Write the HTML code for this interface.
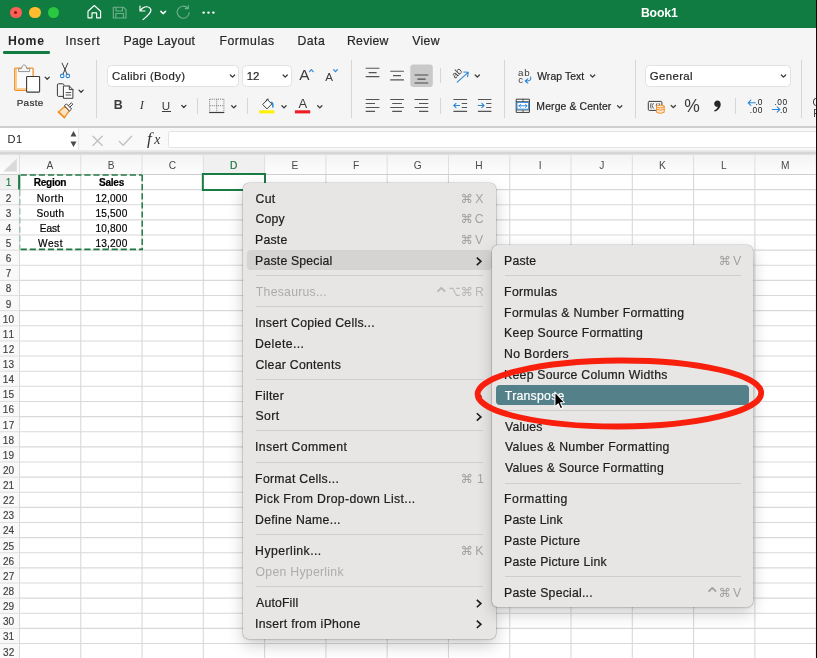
<!DOCTYPE html>
<html><head><meta charset="utf-8"><title>Book1</title>
<style>
*{box-sizing:border-box;margin:0;padding:0}
html,body{width:817px;height:658px;overflow:hidden;background:#fff}
body{position:relative;font-family:"Liberation Sans",sans-serif;color:#262626}
.abs{position:absolute}
.t{position:absolute;white-space:nowrap;line-height:1}
#w{position:absolute;left:0;top:0;width:817px;height:658px;will-change:transform}
svg{position:absolute;overflow:visible}
</style></head><body><div id="w">
<div class="abs" style="left:0px;top:0px;width:817px;height:27.6px;background:#107c41;"></div>
<div class="abs" style="left:10px;top:6.6px;width:11.8px;height:11.8px;background:#fe5f57;border-radius:50%;"></div>
<div class="abs" style="left:28.9px;top:6.6px;width:11.8px;height:11.8px;background:#febc2e;border-radius:50%;"></div>
<div class="abs" style="left:47.7px;top:6.6px;width:11.8px;height:11.8px;background:#28c840;border-radius:50%;"></div>
<div class="abs" style="left:14.4px;top:11px;width:3.1px;height:3.1px;background:#8a1108;border-radius:50%;"></div>
<svg style="left:0;top:0" width="230" height="28" viewBox="0 0 230 28" fill="none" stroke="#fff" stroke-width="1.15" stroke-linecap="round" stroke-linejoin="round">
<path d="M88 11.2 L94.3 5.5 L100.6 11.2 V17.8 H96.6 V12.8 H92 V17.8 H88 Z"/>
<g opacity="0.4"><path d="M113.3 7.2 H123.5 L126 9.7 V18 H113.3 Z M116 7.2 V11 H122.5 V7.2 M115.8 18 V13.5 H123.5 V18"/></g>
<path d="M140 6 V11 H145 M140.3 10.8 C143 6 149 5.5 150.7 9 C152 12 148 15.5 143 19.6"/>
<path d="M160.9 11.4 L163.2 13.7 L165.5 11.4" stroke-width="1.5"/>
<g opacity="0.4"><path d="M187.5 8 A6 6 0 1 0 189.2 12.5 M188.3 5.5 V8.6 H185.2"/></g>
<g fill="#fff" stroke="none"><circle cx="203.6" cy="12.6" r="1.2"/><circle cx="208.5" cy="12.6" r="1.2"/><circle cx="213.4" cy="12.6" r="1.2"/></g>
</svg>
<div class="t" style="left:640.90px;top:7.00px;font-size:12.26px;font-weight:bold;color:#fff;letter-spacing:-0.113px;">Book1</div>
<div class="abs" style="left:0px;top:27.6px;width:817px;height:98.6px;background:#f5f5f5;"></div>
<div class="abs" style="left:0px;top:126px;width:817px;height:1.6px;background:#cecece;"></div>
<div class="t" style="left:8.00px;top:35.00px;font-size:12.26px;font-weight:bold;letter-spacing:0.635px;">Home</div>
<div class="abs" style="left:3px;top:51.2px;width:46.6px;height:2.4px;background:#107c41;border-radius:1.2px;"></div>
<div class="t" style="left:65.50px;top:35.00px;font-size:12.26px;letter-spacing:0.683px;-webkit-text-stroke:0.2px;">Insert</div>
<div class="t" style="left:123.52px;top:35.00px;font-size:12.26px;letter-spacing:0.270px;-webkit-text-stroke:0.2px;">Page Layout</div>
<div class="t" style="left:219.42px;top:35.00px;font-size:12.26px;letter-spacing:0.527px;-webkit-text-stroke:0.2px;">Formulas</div>
<div class="t" style="left:297.42px;top:35.00px;font-size:12.26px;letter-spacing:0.504px;-webkit-text-stroke:0.2px;">Data</div>
<div class="t" style="left:347.02px;top:35.00px;font-size:12.26px;letter-spacing:0.234px;-webkit-text-stroke:0.2px;">Review</div>
<div class="t" style="left:412.14px;top:35.00px;font-size:12.26px;letter-spacing:0.367px;-webkit-text-stroke:0.2px;">View</div>
<div class="abs" style="left:96.2px;top:60.3px;width:1px;height:57.4px;background:#d6d6d6;"></div>
<div class="abs" style="left:351.2px;top:60.3px;width:1px;height:57.4px;background:#d6d6d6;"></div>
<div class="abs" style="left:504.2px;top:60.3px;width:1px;height:57.4px;background:#d6d6d6;"></div>
<div class="abs" style="left:634.6px;top:60.3px;width:1px;height:57.4px;background:#d6d6d6;"></div>
<div class="abs" style="left:800.7px;top:60.3px;width:1px;height:57.4px;background:#d6d6d6;"></div>
<div class="abs" style="left:196.9px;top:98px;width:1px;height:16.3px;background:#d6d6d6;"></div>
<div class="abs" style="left:247.0px;top:98px;width:1px;height:16.3px;background:#d6d6d6;"></div>
<div class="abs" style="left:440.2px;top:67.8px;width:1px;height:15.6px;background:#d6d6d6;"></div>
<div class="abs" style="left:440.2px;top:98.1px;width:1px;height:16.1px;background:#d6d6d6;"></div>
<div class="abs" style="left:735.0px;top:98.2px;width:1px;height:16.3px;background:#d6d6d6;"></div>
<div class="abs" style="left:106.5px;top:64.5px;width:132.6px;height:22.4px;background:#fff;border:1px solid #e2e2e2;border-radius:4.5px;"></div>
<div class="abs" style="left:241.6px;top:64.5px;width:50.3px;height:22.4px;background:#fff;border:1px solid #e2e2e2;border-radius:4.5px;"></div>
<div class="abs" style="left:644.6px;top:64.5px;width:146.1px;height:22.4px;background:#fff;border:1px solid #e2e2e2;border-radius:4.5px;"></div>
<div class="t" style="left:112.03px;top:71.00px;font-size:11.4px;letter-spacing:0.302px;-webkit-text-stroke:0.2px;">Calibri (Body)</div>
<div class="t" style="left:246.65px;top:71.00px;font-size:11.4px;letter-spacing:-0.029px;-webkit-text-stroke:0.2px;">12</div>
<div class="t" style="left:649.83px;top:71.00px;font-size:11.4px;letter-spacing:0.364px;-webkit-text-stroke:0.2px;">General</div>
<div class="t" style="left:16.71px;top:98.00px;font-size:9.9px;color:#303030;letter-spacing:0.311px;-webkit-text-stroke:0.2px;">Paste</div>
<div class="t" style="left:537.15px;top:72.00px;font-size:10.4px;letter-spacing:0.090px;-webkit-text-stroke:0.2px;">Wrap Text</div>
<div class="t" style="left:536.37px;top:102.00px;font-size:10.4px;letter-spacing:0.124px;-webkit-text-stroke:0.2px;">Merge &amp; Center</div>
<div class="t" style="left:113.69px;top:99.00px;font-size:12.4px;font-weight:bold;color:#3b3b3b;">B</div>
<div class="t" style="left:139.86px;top:99.00px;font-size:12.6px;font-style:italic;color:#3b3b3b;font-family:'Liberation Serif',serif;">I</div>
<div class="t" style="left:161.73px;top:100.00px;font-size:11.6px;color:#3b3b3b;">U</div>
<div class="abs" style="left:162px;top:111px;width:9px;height:1px;background:#3b3b3b;"></div>
<div class="t" style="left:299.20px;top:67.00px;font-size:15.4px;color:#3b3b3b;">A</div>
<div class="t" style="left:325.20px;top:71.00px;font-size:11.6px;color:#3b3b3b;">A</div>
<div class="t" style="left:298.40px;top:97.00px;font-size:13px;color:#3b3b3b;">A</div>
<div class="t" style="left:684.19px;top:98.00px;font-size:17.5px;color:#3b3b3b;">%</div>
<div class="t" style="left:812.60px;top:98.00px;font-size:10px;color:#3b3b3b;">C</div>
<div class="t" style="left:813.20px;top:109.00px;font-size:10px;color:#3b3b3b;">F</div>
<svg style="left:0;top:0" width="817" height="130" viewBox="0 0 817 130" fill="none" stroke-linecap="round" stroke-linejoin="round">
<path d="M45.10 77.15 L47.20 79.25 L49.30 77.15" stroke="#3b3b3b" stroke-width="1.3" fill="none" stroke-linecap="round" stroke-linejoin="round"/>
<path d="M79.00 90.15 L81.10 92.25 L83.20 90.15" stroke="#3b3b3b" stroke-width="1.3" fill="none" stroke-linecap="round" stroke-linejoin="round"/>
<path d="M181.70 105.35 L183.80 107.45 L185.90 105.35" stroke="#3b3b3b" stroke-width="1.3" fill="none" stroke-linecap="round" stroke-linejoin="round"/>
<path d="M230.40 75.05 L232.50 77.15 L234.60 75.05" stroke="#3b3b3b" stroke-width="1.3" fill="none" stroke-linecap="round" stroke-linejoin="round"/>
<path d="M283.10 75.05 L285.20 77.15 L287.30 75.05" stroke="#3b3b3b" stroke-width="1.3" fill="none" stroke-linecap="round" stroke-linejoin="round"/>
<path d="M231.70 105.75 L233.80 107.85 L235.90 105.75" stroke="#3b3b3b" stroke-width="1.3" fill="none" stroke-linecap="round" stroke-linejoin="round"/>
<path d="M281.90 105.75 L284.00 107.85 L286.10 105.75" stroke="#3b3b3b" stroke-width="1.3" fill="none" stroke-linecap="round" stroke-linejoin="round"/>
<path d="M317.70 105.75 L319.80 107.85 L321.90 105.75" stroke="#3b3b3b" stroke-width="1.3" fill="none" stroke-linecap="round" stroke-linejoin="round"/>
<path d="M475.20 75.05 L477.30 77.15 L479.40 75.05" stroke="#3b3b3b" stroke-width="1.3" fill="none" stroke-linecap="round" stroke-linejoin="round"/>
<path d="M590.50 75.05 L592.60 77.15 L594.70 75.05" stroke="#3b3b3b" stroke-width="1.3" fill="none" stroke-linecap="round" stroke-linejoin="round"/>
<path d="M617.60 105.75 L619.70 107.85 L621.80 105.75" stroke="#3b3b3b" stroke-width="1.3" fill="none" stroke-linecap="round" stroke-linejoin="round"/>
<path d="M781.40 75.05 L783.50 77.15 L785.60 75.05" stroke="#3b3b3b" stroke-width="1.3" fill="none" stroke-linecap="round" stroke-linejoin="round"/>
<path d="M671.20 105.55 L673.30 107.65 L675.40 105.55" stroke="#3b3b3b" stroke-width="1.3" fill="none" stroke-linecap="round" stroke-linejoin="round"/>
<rect x="14.7" y="68.2" width="18.4" height="22.2" rx="0.8" fill="#fbfbfb" stroke="#f0922b" stroke-width="1.3"/>
<path d="M16.1 69 V89 H26" fill="none" stroke="#f9c57c" stroke-width="1.5" stroke-linecap="butt" stroke-linejoin="miter"/>
<path d="M18.6 71.2 V68.6 H21.6 C21.6 63.8 26.6 63.8 26.6 68.6 H29.6 V71.2 Z" fill="#f6f6f6" stroke="#8a8a8a" stroke-width="0.9"/>
<rect x="26.6" y="76.5" width="13" height="15.6" rx="0.8" fill="#fff" stroke="#3b3b3b" stroke-width="1.1"/>
<path d="M62.1 63.2 L66.9 73.8 M67.8 63.2 L63.1 73.8" stroke="#3b3b3b" stroke-width="1"/>
<circle cx="62.2" cy="75.9" r="1.75" fill="#fff" stroke="#2b88d8" stroke-width="1.15"/><circle cx="67.8" cy="75.9" r="1.75" fill="#fff" stroke="#2b88d8" stroke-width="1.15"/>
<path d="M63.6 96.4 H58.6 Q57.4 96.4 57.4 95.2 V85 Q57.4 83.8 58.6 83.8 H62.8 Q64 83.8 64 85" stroke="#3b3b3b" stroke-width="1"/>
<path d="M63.8 86 H69.3 L72.9 89.6 V98.3 H63.8 Z M69.3 86 V89.6 H72.9" fill="#fff" stroke="#3b3b3b" stroke-width="1"/>
<path d="M66 92.6 H70.8 M66 95 H70.8" stroke="#3b3b3b" stroke-width="0.9"/>
<path d="M58.4 112 L65 106.2 L69.4 110.6 L64.4 117.6 Z" fill="#fbe3c4" stroke="#f0922b" stroke-width="1.3"/>
<path d="M59.6 112.8 L63.8 117 L64.4 117.6 L58.4 112 Z" fill="#f0922b" stroke="#f0922b" stroke-width="1.6"/>
<path d="M64.6 105.6 L66.4 103.8 L71.6 109 L69.8 110.8 Z M68.6 105.6 L71.4 102.8 L72.8 104.2 L70 107" fill="#fff" stroke="#3b3b3b" stroke-width="1"/>
<path d="M309.6 71.6 L311.4 69.6 L313.2 71.6" stroke="#2b88d8" stroke-width="1.2"/>
<path d="M333.6 69.6 L335.5 71.7 L337.4 69.6" stroke="#2b88d8" stroke-width="1.2"/>
<path d="M209.6 99.2 H223.9 M209.6 105.7 H223.9 M209.6 99.2 V112 M216.75 99.2 V112 M223.9 99.2 V112" stroke="#6a6a6a" stroke-width="0.9" stroke-dasharray="1 1.1" stroke-linecap="butt"/>
<path d="M209.2 112.5 H224.3" stroke="#3b3b3b" stroke-width="1.2" stroke-linecap="butt"/>
<path d="M263 104.2 L267.4 99.6 L271.8 104 L267.2 108.6 Z M266 101 Q266.2 98.6 268.4 99" stroke="#3b3b3b" stroke-width="1" fill="#fff"/>
<path d="M271.6 102.4 Q273.4 103.2 272.8 107" stroke="#2b88d8" stroke-width="1.5"/>
<rect x="259.2" y="110.3" width="15.1" height="3.1" fill="#fff100" stroke="none"/>
<rect x="294.9" y="110.3" width="15.3" height="3.1" fill="#ee1c24" stroke="none"/>
<path d="M365.7 68.3 H379.4 M368.6 72.6 H376.6 M365.7 76.6 H379.4 " stroke="#555" stroke-width="1.1" stroke-linecap="butt"/>
<path d="M390.2 71.3 H403.9 M393 75.6 H401 M390.2 79.9 H403.9 " stroke="#555" stroke-width="1.1" stroke-linecap="butt"/>
<rect x="410.3" y="64.5" width="22.5" height="22.4" rx="3" fill="#c9c9c9"/>
<path d="M414.6 75 H428.3 M417.4 79.1 H425.6 M414.6 83 H428.3 " stroke="#4a4a4a" stroke-width="1.1" stroke-linecap="butt"/>
<path d="M365.7 99.5 H379.4 M365.7 103.5 H375 M365.7 107.5 H379.4 M365.7 111.4 H375 " stroke="#555" stroke-width="1.1" stroke-linecap="butt"/>
<path d="M390.2 99.5 H403.9 M392.2 103.5 H401.9 M390.2 107.5 H403.9 M392.2 111.4 H401.9 " stroke="#555" stroke-width="1.1" stroke-linecap="butt"/>
<path d="M414.6 99.5 H428.3 M419 103.5 H428.3 M414.6 107.5 H428.3 M419 111.4 H428.3 " stroke="#555" stroke-width="1.1" stroke-linecap="butt"/>
<path d="M453.4 99.5 H467.1 M461.8 103.5 H467.1 M461.8 107.5 H467.1 M453.4 111.4 H467.1 " stroke="#555" stroke-width="1.1" stroke-linecap="butt"/>
<path d="M477.9 99.5 H491.4 M486.2 103.5 H491.4 M486.2 107.5 H491.4 M477.9 111.4 H491.4 " stroke="#555" stroke-width="1.1" stroke-linecap="butt"/>
<path d="M453.8 105.5 H459.6 M456 103.4 L453.8 105.5 L456 107.6" stroke="#2b88d8" stroke-width="1.1"/>
<path d="M478.2 105.5 H484 M481.8 103.4 L484 105.5 L481.8 107.6" stroke="#2b88d8" stroke-width="1.1"/>
<path d="M457.2 82.2 L468.2 72.3 M463.8 72 L468.3 72.2 L467.6 76.7" stroke="#2b88d8" stroke-width="1.1"/>
<path d="M530.6 77 Q532 81.2 525.6 81 M527.8 78.8 L525.2 81 L527.8 83.2" stroke="#2b88d8" stroke-width="1.1"/>
<rect x="516.6" y="99.2" width="12.8" height="13.2" fill="#fff" stroke="#3b3b3b" stroke-width="1"/>
<path d="M516.6 101.6 H529.4 M516.6 110 H529.4 M523 99.2 V101.6 M523 110 V112.4" stroke="#3b3b3b" stroke-width="0.8"/>
<rect x="517.4" y="102.4" width="11.2" height="6.8" fill="#fff" stroke="#2b88d8" stroke-width="1"/>
<path d="M519 105.8 H527 M520.6 104.2 L519 105.8 L520.6 107.4 M525.4 104.2 L527 105.8 L525.4 107.4" stroke="#2b88d8" stroke-width="1"/>
<rect x="648.3" y="101.4" width="13.6" height="9" rx="1" fill="#f4f4f4" stroke="#3b3b3b" stroke-width="1"/>
<path d="M651 103.4 Q649.8 105.8 651 108.2 M659.2 103.4 Q660.4 105.8 659.2 108.2 M653.4 103.4 L652 105.8 L653.4 108.2 M656.8 103.6 Q655.6 105.8 656.8 108" stroke="#3b3b3b" stroke-width="0.8"/>
<path d="M656.6 106.6 V112.4 Q660.4 114.4 664.2 112.4 V106.6 Z" fill="#fde8cf" stroke="#f0922b" stroke-width="1"/>
<ellipse cx="660.4" cy="106.6" rx="3.8" ry="1.4" fill="#fde8cf" stroke="#f0922b" stroke-width="1"/>
<path d="M656.6 109.4 Q660.4 111.4 664.2 109.4" stroke="#f0922b" stroke-width="0.9"/>
<path d="M748.2 102.8 H755.4 M750.8 100.2 L748.2 102.8 L750.8 105.4" stroke="#2b88d8" stroke-width="1.1"/>
<path d="M772.4 109.5 H779.8 M777.2 106.9 L779.8 109.5 L777.2 112.1" stroke="#2b88d8" stroke-width="1.1"/>
<path d="M717.5 100.4 C719.4 100.4 720.7 101.9 720.7 104.2 C720.7 107.6 718.2 110.4 714.6 111.6 L714.1 110.6 C716 109.8 717.3 108.6 717.7 106.8 C715.6 107 714.2 105.6 714.2 103.7 C714.2 101.8 715.6 100.4 717.5 100.4 Z" fill="#262626"/>
</svg>
<div class="t" style="left:452.02px;top:68.00px;font-size:9.6px;color:#3b3b3b;transform:rotate(-45deg);transform-origin:50% 60%;">ab</div>
<div class="t" style="left:518.01px;top:68.00px;font-size:9.8px;color:#3b3b3b;letter-spacing:0.706px;">ab</div>
<div class="t" style="left:518.22px;top:75.00px;font-size:9.6px;color:#3b3b3b;">c</div>
<div class="t" style="left:755.44px;top:98.00px;font-size:8.4px;color:#222;letter-spacing:0.036px;">.0</div>
<div class="t" style="left:749.74px;top:106.00px;font-size:8.4px;color:#222;letter-spacing:0.537px;">.00</div>
<div class="t" style="left:774.44px;top:98.00px;font-size:8.4px;color:#222;letter-spacing:0.487px;">.00</div>
<div class="t" style="left:780.04px;top:106.00px;font-size:8.4px;color:#222;letter-spacing:0.036px;">.0</div>
<div class="abs" style="left:0px;top:127.6px;width:817px;height:23px;background:#f9f9f9;"></div>
<div class="abs" style="left:0px;top:127.6px;width:77.6px;height:23px;background:#fff;"></div>
<div class="abs" style="left:77.6px;top:127.6px;width:1px;height:23px;background:#e6e6e6;"></div>
<div class="abs" style="left:168.2px;top:130.9px;width:660px;height:17.2px;background:#fff;border:1px solid #e4e4e4;border-radius:2.5px;"></div>
<div class="abs" style="left:0px;top:150.4px;width:817px;height:4.6px;background:linear-gradient(#ececec 0%,#e6e6e6 30%,#d6d6d6 50%,#d6d6d6 75%,#e6e6e6 100%);"></div>
<div class="t" style="left:7.42px;top:134.00px;font-size:11px;color:#222;letter-spacing:0.550px;">D1</div>
<div class="t" style="left:146.93px;top:130.00px;font-size:17px;font-style:italic;color:#333;font-family:'Liberation Serif',serif;">f</div>
<div class="t" style="left:154.21px;top:133.00px;font-size:13.9px;font-style:italic;color:#333;font-family:'Liberation Serif',serif;">x</div>
<svg style="left:0;top:120px" width="200" height="40" viewBox="0 120 200 40" fill="none">
<path d="M73.5 130.9 L76.5 136.4 H70.5 Z M73.5 146.9 L76.5 141.4 H70.5 Z" fill="#4a4a4a"/>
<path d="M93 136.2 L102.2 145.4 M102.2 136.2 L93 145.4" stroke="#c2c2c2" stroke-width="1.4" stroke-linecap="round"/>
<path d="M119.4 141.4 L123.2 145.2 L131.6 136.2" stroke="#c2c2c2" stroke-width="1.4" stroke-linecap="round" stroke-linejoin="round"/>
</svg>
<div class="abs" style="left:0px;top:155px;width:817px;height:19.5px;background:linear-gradient(#f4f4f4,#fdfdfd);"></div>
<div class="abs" style="left:0px;top:174.5px;width:19.5px;height:483.5px;background:#f9f9f9;"></div>
<div class="abs" style="left:203.34px;top:155.2px;width:61.28px;height:19.3px;background:#f0f0f0;"></div>
<div class="abs" style="left:0px;top:174.5px;width:19.5px;height:15.13px;background:#f0f0f0;"></div>
<svg style="left:0;top:0" width="817" height="658" viewBox="0 0 817 658" fill="none" shape-rendering="auto">
<path d="M19.50 174.5 V658 M80.78 174.5 V658 M142.06 174.5 V658 M203.34 174.5 V658 M264.62 174.5 V658 M325.90 174.5 V658 M387.18 174.5 V658 M448.46 174.5 V658 M509.74 174.5 V658 M571.02 174.5 V658 M632.30 174.5 V658 M693.58 174.5 V658 M754.86 174.5 V658 M816.14 174.5 V658 M19.5 174.50 H817 M19.5 189.63 H817 M19.5 204.76 H817 M19.5 219.89 H817 M19.5 235.02 H817 M19.5 250.15 H817 M19.5 265.28 H817 M19.5 280.41 H817 M19.5 295.54 H817 M19.5 310.67 H817 M19.5 325.80 H817 M19.5 340.93 H817 M19.5 356.06 H817 M19.5 371.19 H817 M19.5 386.32 H817 M19.5 401.45 H817 M19.5 416.58 H817 M19.5 431.71 H817 M19.5 446.84 H817 M19.5 461.97 H817 M19.5 477.10 H817 M19.5 492.23 H817 M19.5 507.36 H817 M19.5 522.49 H817 M19.5 537.62 H817 M19.5 552.75 H817 M19.5 567.88 H817 M19.5 583.01 H817 M19.5 598.14 H817 M19.5 613.27 H817 M19.5 628.40 H817 M19.5 643.53 H817 M19.5 658.66 H817 " stroke="#d9d9d9" stroke-width="1.1"/>
<path d="M19.50 155.2 V174.5 M80.78 155.2 V174.5 M142.06 155.2 V174.5 M203.34 155.2 V174.5 M264.62 155.2 V174.5 M325.90 155.2 V174.5 M387.18 155.2 V174.5 M448.46 155.2 V174.5 M509.74 155.2 V174.5 M571.02 155.2 V174.5 M632.30 155.2 V174.5 M693.58 155.2 V174.5 M754.86 155.2 V174.5 M816.14 155.2 V174.5 M0 174.50 H19.5 M0 189.63 H19.5 M0 204.76 H19.5 M0 219.89 H19.5 M0 235.02 H19.5 M0 250.15 H19.5 M0 265.28 H19.5 M0 280.41 H19.5 M0 295.54 H19.5 M0 310.67 H19.5 M0 325.80 H19.5 M0 340.93 H19.5 M0 356.06 H19.5 M0 371.19 H19.5 M0 386.32 H19.5 M0 401.45 H19.5 M0 416.58 H19.5 M0 431.71 H19.5 M0 446.84 H19.5 M0 461.97 H19.5 M0 477.10 H19.5 M0 492.23 H19.5 M0 507.36 H19.5 M0 522.49 H19.5 M0 537.62 H19.5 M0 552.75 H19.5 M0 567.88 H19.5 M0 583.01 H19.5 M0 598.14 H19.5 M0 613.27 H19.5 M0 628.40 H19.5 M0 643.53 H19.5 M0 658.66 H19.5 " stroke="#dedede" stroke-width="1"/>
<path d="M0 174.5 H817" stroke="#cfcfcf" stroke-width="1"/>
<path d="M16.8 158.4 V171.4 H3.3 Z" fill="#dadada"/>
<path d="M20.6 175 H142.2" stroke="#217a47" stroke-width="1.3" stroke-dasharray="6.2 2.9"/>
<path d="M142.2 175 V249.4" stroke="#217a47" stroke-width="1.5" stroke-dasharray="6.2 2.9"/>
<path d="M20.6 249.4 H142.9" stroke="#1c7743" stroke-width="1.9" stroke-dasharray="6.2 2.9"/>
<path d="M19.9 190 V249.4" stroke="#86bb9b" stroke-width="1.1" stroke-dasharray="6.2 2.9"/>
<path d="M19.2 175 V189.6" stroke="#1e7a45" stroke-width="2.2"/>
<rect x="202.85" y="174" width="62.15" height="16" stroke="#1b7b45" stroke-width="2" fill="#fff"/>
</svg>
<div class="t" style="left:46.55px;top:161.00px;font-size:10.2px;color:#4a4a4a;">A</div>
<div class="t" style="left:107.68px;top:161.00px;font-size:10.2px;color:#4a4a4a;">B</div>
<div class="t" style="left:168.75px;top:161.00px;font-size:10.2px;color:#4a4a4a;">C</div>
<div class="t" style="left:229.93px;top:161.00px;font-size:10.2px;color:#1a7a45;-webkit-text-stroke:0.2px;">D</div>
<div class="t" style="left:291.46px;top:161.00px;font-size:10.2px;color:#4a4a4a;">E</div>
<div class="t" style="left:353.03px;top:161.00px;font-size:10.2px;color:#4a4a4a;">F</div>
<div class="t" style="left:413.77px;top:161.00px;font-size:10.2px;color:#4a4a4a;">G</div>
<div class="t" style="left:475.23px;top:161.00px;font-size:10.2px;color:#4a4a4a;">H</div>
<div class="t" style="left:538.78px;top:161.00px;font-size:10.2px;color:#4a4a4a;">I</div>
<div class="t" style="left:599.22px;top:161.00px;font-size:10.2px;color:#4a4a4a;">J</div>
<div class="t" style="left:658.99px;top:161.00px;font-size:10.2px;color:#4a4a4a;">K</div>
<div class="t" style="left:720.93px;top:161.00px;font-size:10.2px;color:#4a4a4a;">L</div>
<div class="t" style="left:781.07px;top:161.00px;font-size:10.2px;color:#4a4a4a;">M</div>
<div class="t" style="left:5.67px;top:178.00px;font-size:10px;color:#1a7a45;-webkit-text-stroke:0.15px;">1</div>
<div class="t" style="left:5.82px;top:194.00px;font-size:10px;color:#404040;-webkit-text-stroke:0.15px;">2</div>
<div class="t" style="left:5.82px;top:209.00px;font-size:10px;color:#404040;-webkit-text-stroke:0.15px;">3</div>
<div class="t" style="left:5.87px;top:224.00px;font-size:10px;color:#404040;-webkit-text-stroke:0.15px;">4</div>
<div class="t" style="left:5.82px;top:239.00px;font-size:10px;color:#404040;-webkit-text-stroke:0.15px;">5</div>
<div class="t" style="left:5.77px;top:254.00px;font-size:10px;color:#404040;-webkit-text-stroke:0.15px;">6</div>
<div class="t" style="left:5.82px;top:269.00px;font-size:10px;color:#404040;-webkit-text-stroke:0.15px;">7</div>
<div class="t" style="left:5.80px;top:284.00px;font-size:10px;color:#404040;-webkit-text-stroke:0.15px;">8</div>
<div class="t" style="left:5.83px;top:300.00px;font-size:10px;color:#404040;-webkit-text-stroke:0.15px;">9</div>
<div class="t" style="left:2.75px;top:315.00px;font-size:10px;color:#404040;letter-spacing:0.200px;-webkit-text-stroke:0.15px;">10</div>
<div class="t" style="left:2.75px;top:330.00px;font-size:10px;color:#404040;letter-spacing:1.050px;-webkit-text-stroke:0.15px;">11</div>
<div class="t" style="left:2.75px;top:345.00px;font-size:10px;color:#404040;letter-spacing:0.350px;-webkit-text-stroke:0.15px;">12</div>
<div class="t" style="left:2.75px;top:360.00px;font-size:10px;color:#404040;letter-spacing:0.250px;-webkit-text-stroke:0.15px;">13</div>
<div class="t" style="left:2.75px;top:375.00px;font-size:10px;color:#404040;letter-spacing:0.150px;-webkit-text-stroke:0.15px;">14</div>
<div class="t" style="left:2.75px;top:390.00px;font-size:10px;color:#404040;letter-spacing:0.250px;-webkit-text-stroke:0.15px;">15</div>
<div class="t" style="left:2.75px;top:405.00px;font-size:10px;color:#404040;letter-spacing:0.250px;-webkit-text-stroke:0.15px;">16</div>
<div class="t" style="left:2.75px;top:421.00px;font-size:10px;color:#404040;letter-spacing:0.350px;-webkit-text-stroke:0.15px;">17</div>
<div class="t" style="left:2.75px;top:436.00px;font-size:10px;color:#404040;letter-spacing:0.250px;-webkit-text-stroke:0.15px;">18</div>
<div class="t" style="left:2.75px;top:451.00px;font-size:10px;color:#404040;letter-spacing:0.300px;-webkit-text-stroke:0.15px;">19</div>
<div class="t" style="left:3.00px;top:466.00px;font-size:10px;color:#404040;letter-spacing:-0.050px;-webkit-text-stroke:0.15px;">20</div>
<div class="t" style="left:3.00px;top:481.00px;font-size:10px;color:#404040;letter-spacing:0.050px;-webkit-text-stroke:0.15px;">21</div>
<div class="t" style="left:3.00px;top:496.00px;font-size:10px;color:#404040;letter-spacing:0.100px;-webkit-text-stroke:0.15px;">22</div>
<div class="t" style="left:3.00px;top:511.00px;font-size:10px;color:#404040;-webkit-text-stroke:0.15px;">23</div>
<div class="t" style="left:3.00px;top:526.00px;font-size:10px;color:#404040;letter-spacing:-0.100px;-webkit-text-stroke:0.15px;">24</div>
<div class="t" style="left:3.00px;top:542.00px;font-size:10px;color:#404040;-webkit-text-stroke:0.15px;">25</div>
<div class="t" style="left:3.00px;top:557.00px;font-size:10px;color:#404040;-webkit-text-stroke:0.15px;">26</div>
<div class="t" style="left:3.00px;top:572.00px;font-size:10px;color:#404040;letter-spacing:0.100px;-webkit-text-stroke:0.15px;">27</div>
<div class="t" style="left:3.00px;top:587.00px;font-size:10px;color:#404040;-webkit-text-stroke:0.15px;">28</div>
<div class="t" style="left:3.00px;top:602.00px;font-size:10px;color:#404040;letter-spacing:0.050px;-webkit-text-stroke:0.15px;">29</div>
<div class="t" style="left:3.10px;top:617.00px;font-size:10px;color:#404040;letter-spacing:-0.150px;-webkit-text-stroke:0.15px;">30</div>
<div class="t" style="left:3.10px;top:632.00px;font-size:10px;color:#404040;letter-spacing:-0.050px;-webkit-text-stroke:0.15px;">31</div>
<div class="t" style="left:3.10px;top:648.00px;font-size:10px;color:#404040;-webkit-text-stroke:0.15px;">32</div>
<div class="t" style="left:33.84px;top:178.00px;font-size:10.1px;font-weight:bold;color:#000;letter-spacing:-0.315px;-webkit-text-stroke:0.2px;">Region</div>
<div class="t" style="left:99.05px;top:178.00px;font-size:10.1px;font-weight:bold;color:#000;letter-spacing:-0.288px;-webkit-text-stroke:0.2px;">Sales</div>
<div class="t" style="left:36.69px;top:194.00px;font-size:10.1px;color:#000;letter-spacing:0.543px;-webkit-text-stroke:0.2px;">North</div>
<div class="t" style="left:95.49px;top:194.00px;font-size:10.1px;color:#000;letter-spacing:0.181px;-webkit-text-stroke:0.2px;">12,000</div>
<div class="t" style="left:36.60px;top:209.00px;font-size:10.1px;color:#000;letter-spacing:0.263px;-webkit-text-stroke:0.2px;">South</div>
<div class="t" style="left:95.49px;top:209.00px;font-size:10.1px;color:#000;letter-spacing:0.181px;-webkit-text-stroke:0.2px;">15,500</div>
<div class="t" style="left:39.74px;top:224.00px;font-size:10.1px;color:#000;letter-spacing:-0.014px;-webkit-text-stroke:0.2px;">East</div>
<div class="t" style="left:95.49px;top:224.00px;font-size:10.1px;color:#000;letter-spacing:0.181px;-webkit-text-stroke:0.2px;">10,800</div>
<div class="t" style="left:38.00px;top:239.00px;font-size:10.1px;color:#000;letter-spacing:0.542px;-webkit-text-stroke:0.2px;">West</div>
<div class="t" style="left:95.49px;top:239.00px;font-size:10.1px;color:#000;letter-spacing:0.181px;-webkit-text-stroke:0.2px;">13,200</div>
<div class="abs" style="left:242.5px;top:182.5px;width:253.8px;height:456.16px;background:#e7e6e5;border-radius:6px;box-shadow:0 0 0 0.6px rgba(0,0,0,0.2),0 6px 16px rgba(0,0,0,0.2),0 1px 3px rgba(0,0,0,0.08);"></div>
<div class="t" style="left:255.49px;top:193.00px;font-size:12.26px;color:#1e1e1e;letter-spacing:0.305px;-webkit-text-stroke:0.22px;">Cut</div>
<div class="t" style="left:475.29px;top:193.00px;font-size:12.26px;color:#a3a2a1;">X</div>
<div class="t" style="left:460.82px;top:193.00px;font-size:12.3px;color:#a3a2a1;font-family:'DejaVu Sans','Liberation Sans',sans-serif;">⌘</div>
<div class="t" style="left:255.49px;top:213.00px;font-size:12.26px;color:#1e1e1e;letter-spacing:0.162px;-webkit-text-stroke:0.22px;">Copy</div>
<div class="t" style="left:474.80px;top:213.00px;font-size:12.26px;color:#a3a2a1;">C</div>
<div class="t" style="left:460.82px;top:213.00px;font-size:12.3px;color:#a3a2a1;font-family:'DejaVu Sans','Liberation Sans',sans-serif;">⌘</div>
<div class="t" style="left:255.12px;top:234.00px;font-size:12.26px;color:#1e1e1e;letter-spacing:0.202px;-webkit-text-stroke:0.22px;">Paste</div>
<div class="t" style="left:475.11px;top:234.00px;font-size:12.26px;color:#a3a2a1;">V</div>
<div class="t" style="left:460.82px;top:234.00px;font-size:12.3px;color:#a3a2a1;font-family:'DejaVu Sans','Liberation Sans',sans-serif;">⌘</div>
<div class="abs" style="left:246.7px;top:249.77px;width:245.4px;height:20.34px;background:#d5d4d3;border-radius:4px;"></div>
<div class="t" style="left:255.12px;top:255.00px;font-size:12.26px;color:#1e1e1e;letter-spacing:0.192px;-webkit-text-stroke:0.22px;">Paste Special</div>
<svg style="left:0;top:0" width="817" height="658" viewBox="0 0 817 658"><path d="M476.80 257.67 L480.90 261.37 L476.80 265.07" stroke="#1e1e1e" stroke-width="1.6" fill="none" stroke-linecap="butt" stroke-linejoin="miter"/></svg>
<div class="abs" style="left:256.1px;top:274.9px;width:227.1px;height:1px;background:#cfcecd;"></div>
<div class="t" style="left:255.85px;top:286.00px;font-size:12.26px;color:#adacab;letter-spacing:0.249px;">Thesaurus...</div>
<div class="t" style="left:474.92px;top:286.00px;font-size:12.26px;color:#b9b8b7;">R</div>
<div class="t" style="left:432.80px;top:285.00px;font-size:20.5px;color:#b9b8b7;font-family:'DejaVu Sans','Liberation Sans',sans-serif;">⌃</div>
<div class="t" style="left:448.63px;top:288.00px;font-size:10.2px;color:#b9b8b7;font-family:'DejaVu Sans','Liberation Sans',sans-serif;transform:scaleY(1.45);transform-origin:0 85%;">⌥</div>
<div class="t" style="left:460.82px;top:286.00px;font-size:12.3px;color:#b9b8b7;font-family:'DejaVu Sans','Liberation Sans',sans-serif;">⌘</div>
<div class="abs" style="left:256.1px;top:306.01px;width:227.1px;height:1px;background:#cfcecd;"></div>
<div class="t" style="left:255.00px;top:317.00px;font-size:12.26px;color:#1e1e1e;letter-spacing:0.283px;-webkit-text-stroke:0.22px;">Insert Copied Cells...</div>
<div class="t" style="left:255.12px;top:338.00px;font-size:12.26px;color:#1e1e1e;letter-spacing:0.397px;-webkit-text-stroke:0.22px;">Delete...</div>
<div class="t" style="left:255.49px;top:359.00px;font-size:12.26px;color:#1e1e1e;letter-spacing:0.274px;-webkit-text-stroke:0.22px;">Clear Contents</div>
<div class="abs" style="left:256.1px;top:378.6px;width:227.1px;height:1px;background:#cfcecd;"></div>
<div class="t" style="left:255.12px;top:390.00px;font-size:12.26px;color:#1e1e1e;letter-spacing:0.289px;-webkit-text-stroke:0.22px;">Filter</div>
<svg style="left:0;top:0" width="817" height="658" viewBox="0 0 817 658"><path d="M476.80 392.48 L480.90 396.18 L476.80 399.88" stroke="#1e1e1e" stroke-width="1.6" fill="none" stroke-linecap="butt" stroke-linejoin="miter"/></svg>
<div class="t" style="left:255.55px;top:410.00px;font-size:12.26px;color:#1e1e1e;letter-spacing:0.392px;-webkit-text-stroke:0.22px;">Sort</div>
<svg style="left:0;top:0" width="817" height="658" viewBox="0 0 817 658"><path d="M476.80 413.22 L480.90 416.92 L476.80 420.62" stroke="#1e1e1e" stroke-width="1.6" fill="none" stroke-linecap="butt" stroke-linejoin="miter"/></svg>
<div class="abs" style="left:256.1px;top:430.45px;width:227.1px;height:1px;background:#cfcecd;"></div>
<div class="t" style="left:255.00px;top:441.00px;font-size:12.26px;color:#1e1e1e;letter-spacing:0.361px;-webkit-text-stroke:0.22px;">Insert Comment</div>
<div class="abs" style="left:256.1px;top:461.56px;width:227.1px;height:1px;background:#cfcecd;"></div>
<div class="t" style="left:255.12px;top:473.00px;font-size:12.26px;color:#1e1e1e;letter-spacing:0.292px;-webkit-text-stroke:0.22px;">Format Cells...</div>
<div class="t" style="left:476.95px;top:473.00px;font-size:12.26px;color:#a3a2a1;">1</div>
<div class="t" style="left:460.82px;top:473.00px;font-size:12.3px;color:#a3a2a1;font-family:'DejaVu Sans','Liberation Sans',sans-serif;">⌘</div>
<div class="t" style="left:255.12px;top:493.00px;font-size:12.26px;color:#1e1e1e;letter-spacing:0.341px;-webkit-text-stroke:0.22px;">Pick From Drop-down List...</div>
<div class="t" style="left:255.12px;top:514.00px;font-size:12.26px;color:#1e1e1e;letter-spacing:0.282px;-webkit-text-stroke:0.22px;">Define Name...</div>
<div class="abs" style="left:256.1px;top:534.15px;width:227.1px;height:1px;background:#cfcecd;"></div>
<div class="t" style="left:255.12px;top:545.00px;font-size:12.26px;color:#1e1e1e;letter-spacing:0.444px;-webkit-text-stroke:0.22px;">Hyperlink...</div>
<div class="t" style="left:475.17px;top:545.00px;font-size:12.26px;color:#a3a2a1;">K</div>
<div class="t" style="left:460.82px;top:545.00px;font-size:12.3px;color:#a3a2a1;font-family:'DejaVu Sans','Liberation Sans',sans-serif;">⌘</div>
<div class="t" style="left:255.55px;top:566.00px;font-size:12.26px;color:#adacab;letter-spacing:0.275px;">Open Hyperlink</div>
<div class="abs" style="left:256.1px;top:586.0px;width:227.1px;height:1px;background:#cfcecd;"></div>
<div class="t" style="left:256.10px;top:597.00px;font-size:12.26px;color:#1e1e1e;letter-spacing:0.167px;-webkit-text-stroke:0.22px;">AutoFill</div>
<svg style="left:0;top:0" width="817" height="658" viewBox="0 0 817 658"><path d="M476.80 599.88 L480.90 603.58 L476.80 607.28" stroke="#1e1e1e" stroke-width="1.6" fill="none" stroke-linecap="butt" stroke-linejoin="miter"/></svg>
<div class="t" style="left:255.00px;top:618.00px;font-size:12.26px;color:#1e1e1e;letter-spacing:0.305px;-webkit-text-stroke:0.22px;">Insert from iPhone</div>
<svg style="left:0;top:0" width="817" height="658" viewBox="0 0 817 658"><path d="M476.80 620.62 L480.90 624.32 L476.80 628.02" stroke="#1e1e1e" stroke-width="1.6" fill="none" stroke-linecap="butt" stroke-linejoin="miter"/></svg>
<div class="abs" style="left:491.5px;top:244.6px;width:261.8px;height:362.68px;background:#e7e6e5;border-radius:6px;box-shadow:0 0 0 0.6px rgba(0,0,0,0.2),0 6px 16px rgba(0,0,0,0.2),0 1px 3px rgba(0,0,0,0.08);"></div>
<div class="t" style="left:504.12px;top:255.00px;font-size:12.26px;color:#1e1e1e;letter-spacing:0.177px;-webkit-text-stroke:0.22px;">Paste</div>
<div class="t" style="left:733.11px;top:255.00px;font-size:12.26px;color:#a3a2a1;">V</div>
<div class="t" style="left:718.82px;top:255.00px;font-size:12.3px;color:#a3a2a1;font-family:'DejaVu Sans','Liberation Sans',sans-serif;">⌘</div>
<div class="abs" style="left:505.1px;top:275.22px;width:236.1px;height:1px;background:#cfcecd;"></div>
<div class="t" style="left:504.12px;top:286.00px;font-size:12.26px;color:#1e1e1e;letter-spacing:0.284px;-webkit-text-stroke:0.22px;">Formulas</div>
<div class="t" style="left:504.12px;top:307.00px;font-size:12.26px;color:#1e1e1e;letter-spacing:0.310px;-webkit-text-stroke:0.22px;">Formulas &amp; Number Formatting</div>
<div class="t" style="left:504.12px;top:327.00px;font-size:12.26px;color:#1e1e1e;letter-spacing:0.280px;-webkit-text-stroke:0.22px;">Keep Source Formatting</div>
<div class="t" style="left:504.12px;top:348.00px;font-size:12.26px;color:#1e1e1e;letter-spacing:0.297px;-webkit-text-stroke:0.22px;">No Borders</div>
<div class="t" style="left:504.12px;top:369.00px;font-size:12.26px;color:#1e1e1e;letter-spacing:0.250px;-webkit-text-stroke:0.22px;">Keep Source Column Widths</div>
<div class="abs" style="left:495.7px;top:384.91px;width:253.4px;height:20.34px;background:#54808a;border-radius:4px;"></div>
<div class="t" style="left:504.85px;top:390.00px;font-size:12.26px;color:#fff;letter-spacing:0.257px;-webkit-text-stroke:0.22px;">Transpose</div>
<div class="abs" style="left:505.1px;top:410.04px;width:236.1px;height:1px;background:#cfcecd;"></div>
<div class="t" style="left:505.04px;top:421.00px;font-size:12.26px;color:#1e1e1e;letter-spacing:0.139px;-webkit-text-stroke:0.22px;">Values</div>
<div class="t" style="left:505.04px;top:441.00px;font-size:12.26px;color:#1e1e1e;letter-spacing:0.291px;-webkit-text-stroke:0.22px;">Values &amp; Number Formatting</div>
<div class="t" style="left:505.04px;top:462.00px;font-size:12.26px;color:#1e1e1e;letter-spacing:0.255px;-webkit-text-stroke:0.22px;">Values &amp; Source Formatting</div>
<div class="abs" style="left:505.1px;top:482.63px;width:236.1px;height:1px;background:#cfcecd;"></div>
<div class="t" style="left:504.12px;top:493.00px;font-size:12.26px;color:#1e1e1e;letter-spacing:0.531px;-webkit-text-stroke:0.22px;">Formatting</div>
<div class="t" style="left:504.12px;top:514.00px;font-size:12.26px;color:#1e1e1e;letter-spacing:0.136px;-webkit-text-stroke:0.22px;">Paste Link</div>
<div class="t" style="left:504.12px;top:535.00px;font-size:12.26px;color:#1e1e1e;letter-spacing:0.254px;-webkit-text-stroke:0.22px;">Paste Picture</div>
<div class="t" style="left:504.12px;top:556.00px;font-size:12.26px;color:#1e1e1e;letter-spacing:0.221px;-webkit-text-stroke:0.22px;">Paste Picture Link</div>
<div class="abs" style="left:505.1px;top:575.96px;width:236.1px;height:1px;background:#cfcecd;"></div>
<div class="t" style="left:504.12px;top:587.00px;font-size:12.26px;color:#1e1e1e;letter-spacing:0.229px;-webkit-text-stroke:0.22px;">Paste Special...</div>
<div class="t" style="left:733.11px;top:587.00px;font-size:12.26px;color:#a3a2a1;">V</div>
<div class="t" style="left:703.70px;top:585.00px;font-size:20.5px;color:#a3a2a1;font-family:'DejaVu Sans','Liberation Sans',sans-serif;">⌃</div>
<div class="t" style="left:718.82px;top:587.00px;font-size:12.3px;color:#a3a2a1;font-family:'DejaVu Sans','Liberation Sans',sans-serif;">⌘</div>
<svg style="left:0;top:0" width="817" height="658" viewBox="0 0 817 658"><ellipse cx="619.4" cy="393.5" rx="141.8" ry="33" fill="none" stroke="#f8200c" stroke-width="5.8" transform="rotate(-0.25 619.4 393.5)"/></svg>
<svg style="left:0;top:0" width="817" height="658" viewBox="0 0 817 658"><path d="M554.9 392 V406.8 L558.2 403.8 L560.4 408.8 L562.8 407.7 L560.6 402.8 L564.4 402.5 Z" fill="#000" stroke="#fff" stroke-width="1.1" stroke-linejoin="round"/></svg>
<div class="abs" style="left:815.6px;top:0px;width:1.4px;height:658px;background:#0a0a0a;"></div>
</div></body></html>
